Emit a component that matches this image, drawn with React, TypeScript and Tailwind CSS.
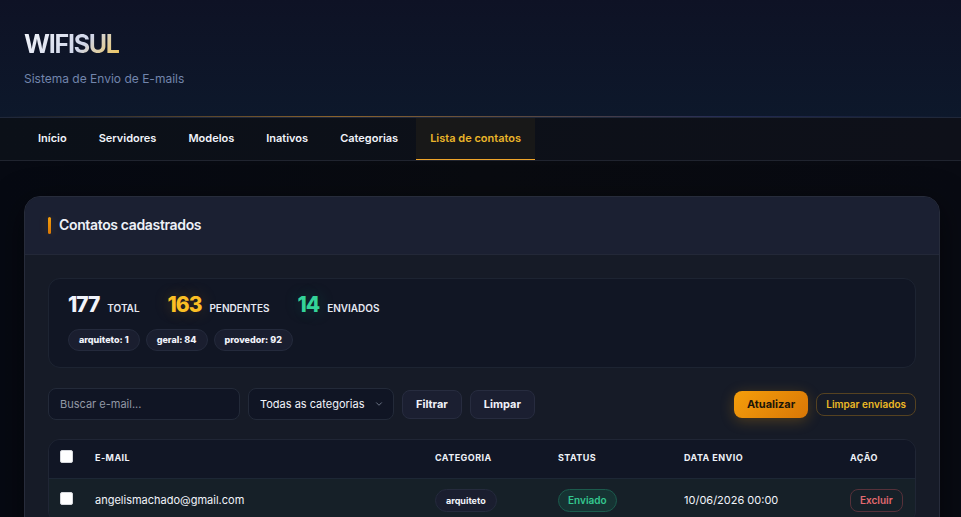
import { ChevronDown } from "lucide-react";

const navItems = ["Início", "Servidores", "Modelos", "Inativos", "Categorias", "Lista de contatos"];

const stats = [
  { value: 177, label: "Total", tone: "text-[#f1f3fa]" },
  { value: 163, label: "Pendentes", tone: "text-[#fbbf24] [text-shadow:0_0_16px_#f59e0b40]" },
  { value: 14, label: "Enviados", tone: "text-[#34d399] [text-shadow:0_0_16px_#10b98140]" },
];

const categories = ["arquiteto: 1", "geral: 84", "provedor: 92"];

const contacts = [
  { email: "angelismachado@gmail.com", category: "arquiteto", status: "Enviado", date: "10/06/2026 00:00" },
];

const secondaryButton =
  "h-[29px] rounded-lg border border-[#272c3f] bg-[#1b1f31] px-[13px] text-[11px] font-bold text-[#f1f3fa]";
const checkbox =
  "block size-[13px] appearance-none rounded-[2px] border border-[#d5d7dc] bg-white checked:bg-amber-500";
const heading = "px-[11px] pb-0.5 text-left align-middle text-[9px] font-bold uppercase tracking-wider text-[#eef1f8]";

function Header() {
  return (
    <header className="relative border-b border-[#20283a] bg-linear-to-b from-[#0e1225] to-[#0d182b] px-6 pt-7 pb-[30px]">
      <h1 className="w-fit bg-linear-[135deg,#f4f6fc_0%,#cfd5e8_60%,#fbbf24_110%] bg-clip-text text-[25px] leading-8 font-bold tracking-tighter text-transparent">
        WIFISUL
      </h1>
      <p className="mt-2.5 text-xs leading-[17px] text-[#7285ac]">Sistema de Envio de E-mails</p>
      <div className="absolute inset-x-0 bottom-0 h-px bg-linear-[90deg,transparent_0%,#8b632c_35%,#262c55_75%,transparent_100%]" />
    </header>
  );
}

function Nav() {
  return (
    <nav className="flex gap-1 border-b border-[#20242f] bg-linear-to-r from-[#0b1018] to-[#0e1019] px-6">
      {navItems.map((item) => {
        const active = item === "Lista de contatos";
        return (
          <a
            key={item}
            href="#"
            aria-current={active ? "page" : undefined}
            className={
              active
                ? "border-b border-[#f0a52a] bg-[#181818] px-3.5 pt-3 pb-[13px] text-[11px] leading-4 font-semibold text-[#eab52a]"
                : "border-b border-transparent px-3.5 pt-3 pb-[13px] text-[11px] leading-4 font-semibold text-[#f1f3fa]"
            }
          >
            {item}
          </a>
        );
      })}
    </nav>
  );
}

function Stats() {
  return (
    <section className="rounded-xl border border-[#1d2432] bg-[#111624] px-[19px] pt-3.5 pb-4">
      <dl className="flex gap-7">
        {stats.map((stat) => (
          <div key={stat.label} className="flex flex-row-reverse items-baseline gap-2">
            <dt className="text-[10px] font-semibold text-[#e6e9f2] uppercase">{stat.label}</dt>
            <dd className={`text-[21px] leading-6 font-extrabold tracking-tighter ${stat.tone}`}>{stat.value}</dd>
          </div>
        ))}
      </dl>
      <ul className="mt-3 flex gap-1.5">
        {categories.map((category) => (
          <li
            key={category}
            className="rounded-full border border-[#242a3c] bg-[#1a1e2f] px-2.5 py-0.5 text-[9px] leading-4 font-extrabold text-[#f1f3fa]"
          >
            {category}
          </li>
        ))}
      </ul>
    </section>
  );
}

function Filters() {
  return (
    <div className="mt-5 flex h-8 items-center justify-between">
      <form className="flex items-center gap-2">
        <input
          type="text"
          aria-label="Buscar e-mail"
          placeholder="Buscar e-mail..."
          className="h-8 w-48 rounded-lg border border-[#232a39] bg-[#101524] px-[11px] text-[11px] text-[#e6e9f2] placeholder:text-[#9298a5]"
        />
        <div className="relative">
          <select
            aria-label="Categoria"
            className="h-8 w-[146px] appearance-none rounded-lg border border-[#232a39] bg-[#101524] px-[11px] text-[11px] text-[#f1f3fa]"
          >
            <option>Todas as categorias</option>
            <option>arquiteto</option>
            <option>geral</option>
            <option>provedor</option>
          </select>
          <ChevronDown className="pointer-events-none absolute top-[11px] right-2.5 size-2.5 text-[#7c8698]" />
        </div>
        <button type="button" className={secondaryButton}>Filtrar</button>
        <button type="button" className={secondaryButton}>Limpar</button>
      </form>
      <div className="flex items-center gap-2">
        <button
          type="button"
          className="h-[27px] rounded-lg bg-linear-135 from-[#f59e0b] to-[#d97706] px-[13px] text-[11px] font-bold text-[#1c1508] shadow-[0_3px_14px_#f59e0b40]"
        >
          Atualizar
        </button>
        <button
          type="button"
          className="h-[23px] rounded-lg border border-[#554221] px-[9px] text-[10px] font-semibold text-[#edb925]"
        >
          Limpar enviados
        </button>
      </div>
    </div>
  );
}

function Contacts() {
  return (
    <div className="mt-[19px] overflow-hidden rounded-xl border border-[#202635]">
      <table className="w-full table-fixed">
        <thead>
          <tr className="h-[38px] bg-[#111625]">
            <th className="w-[35px] px-[11px] pb-1 align-middle">
              <input type="checkbox" aria-label="Selecionar todos" className={checkbox} />
            </th>
            <th className={heading}>E-mail</th>
            <th className={`w-[123px] ${heading}`}>Categoria</th>
            <th className={`w-[126px] ${heading}`}>Status</th>
            <th className={`w-[166px] ${heading}`}>Data envio</th>
            <th className={`w-[76px] ${heading}`}>Ação</th>
          </tr>
        </thead>
        <tbody>
          {contacts.map((contact) => (
            <tr key={contact.email} className="h-11 border-t border-[#1d2735] bg-[#162028] text-[11px] text-[#f1f3fa]">
              <td className="px-[11px] pb-1">
                <input type="checkbox" aria-label={`Selecionar ${contact.email}`} className={checkbox} />
              </td>
              <td className="px-[11px]">{contact.email}</td>
              <td className="px-[11px]">
                <span className="inline-block rounded-full border border-[#252b3d] bg-[#1a1e2f] px-2.5 py-0.5 text-[9px] leading-[17px] font-bold text-[#f1f3fa]">
                  {contact.category}
                </span>
              </td>
              <td className="px-[11px]">
                <span className="inline-block rounded-full border border-[#1c5b4d] bg-[#163333] px-[9px] py-0.5 text-[10px] leading-[17px] font-semibold text-[#34c78f]">
                  {contact.status}
                </span>
              </td>
              <td className="px-[11px]">{contact.date}</td>
              <td className="px-[11px]">
                <button type="button" className="h-[23px] rounded-lg border border-[#56313a] px-[9px] text-[10px] font-semibold text-[#e26a70]">
                  Excluir
                </button>
              </td>
            </tr>
          ))}
        </tbody>
      </table>
    </div>
  );
}

export default function App() {
  return (
    <div className="h-screen overflow-hidden bg-linear-to-r from-[#060912] via-[#090b10] to-[#080a12] font-['Inter',sans-serif]">
      <Header />
      <Nav />
      <main className="pt-[35px] pr-[21px] pb-6 pl-6">
        <section className="overflow-hidden rounded-2xl border border-[#272c3b] bg-[#161b27] shadow-[0_8px_32px_#00000080]">
          <div className="flex items-center gap-2 border-b border-[#232838] bg-[#1b2032] px-[23px] pt-4 pb-[17px]">
            <span className="h-[17px] w-[3px] rounded-sm bg-linear-to-b from-[#f59e0b] to-[#d97706] shadow-[0_0_10px_#f59e0b33]" />
            <h2 className="text-sm leading-6 font-semibold tracking-tight text-[#eef1f8]">Contatos cadastrados</h2>
          </div>
          <div className="px-[23px] pt-[23px] pb-6">
            <Stats />
            <Filters />
            <Contacts />
          </div>
        </section>
      </main>
    </div>
  );
}
